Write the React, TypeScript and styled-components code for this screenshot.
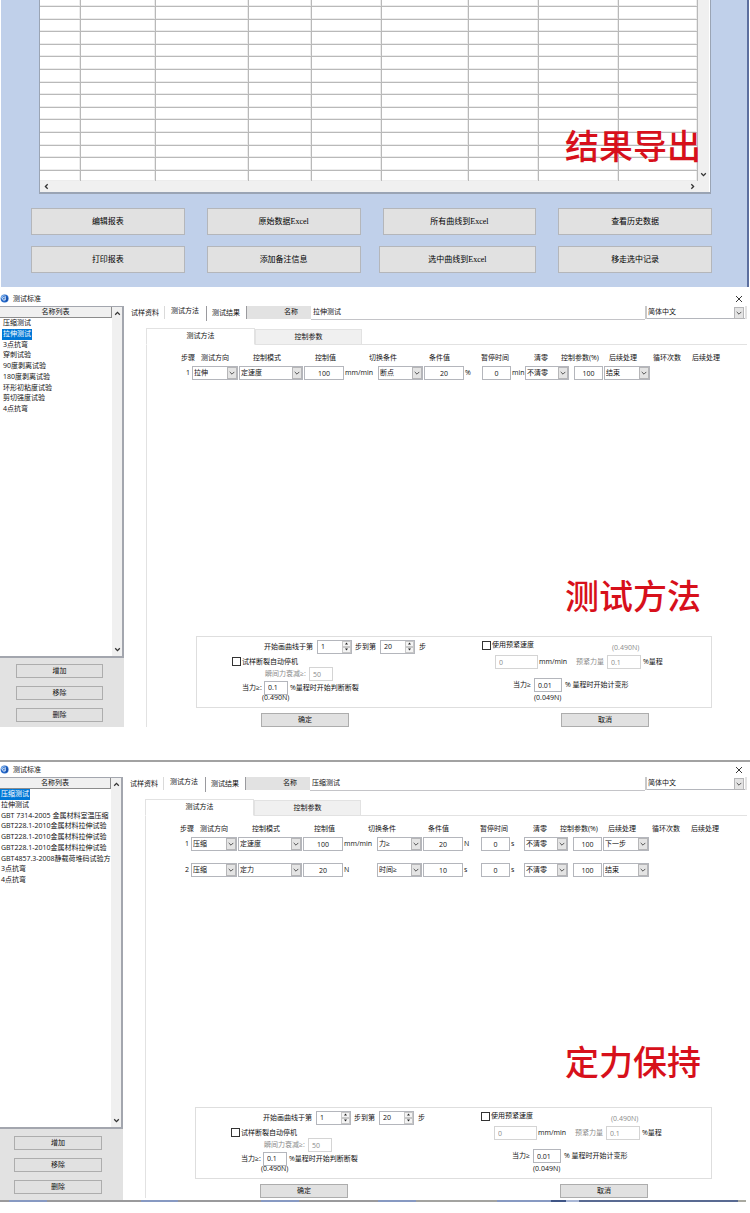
import React from "react";
import styled, { createGlobalStyle, css } from "styled-components";

const Global = createGlobalStyle`
  *, *::before, *::after { box-sizing: border-box; }
  body { margin: 0; background: #fff; }
  body, button, input, select {
    font-family: "Open Sans", "Noto Sans CJK SC", sans-serif;
    font-size: 7px;
    line-height: 10px;
    color: #111;
  }
  button, input, select { margin: 0; padding: 0; border-radius: 0; }
`;

/* ---------- result export ---------- */

const Export = styled.section`
  position: relative;
  margin: 0 1px;
  padding: 0 35px 14px 30px;
  background: #c0d0ea;
  border-right: 2px solid #5c6f9f;
  font-family: "Liberation Serif", "Noto Sans CJK SC", serif;
`;

const Sheet = styled.div`
  display: grid;
  grid-template-columns: 1fr 11px;
  margin: 0 1px 14px 8px;
  padding: 0 2px 0 0;
  background: #fff;
  border: solid #9aa4b4;
  border-width: 0 1px 2px 1px;
`;

const Results = styled.table`
  width: 100%;
  table-layout: fixed;
  border-collapse: separate;
  border-spacing: 0;
`;

const ResultRow = styled.tr`
  height: 13px;
  &:nth-child(5n + 3), &:nth-child(5n) { height: 12px; }
  &:first-child { height: 7px; }
  &:last-child { height: 10px; }
  td {
    padding: 0;
    border-right: 1px solid #b9b9b9;
    border-bottom: 1px solid #b9b9b9;
    box-shadow: inset -1px -1px 0 #ececec;
  }
  &:last-child td { border-bottom: 0; }
`;

const Track = styled.div<{ $across?: boolean }>`
  display: flex;
  align-items: center;
  justify-content: center;
  background: #f0f0f0;
  ${(p) =>
    p.$across
      ? css`
          grid-column: 1 / 3;
          justify-content: space-between;
          height: 11px;
          padding: 0 13px 0 3px;
        `
      : css`
          align-items: flex-end;
          padding-bottom: 3px;
        `}
`;

const ExportActions = styled.div`
  display: grid;
  grid-template-columns: repeat(4, 1fr);
  gap: 11px 22px;
`;

const ExportButton = styled.button<{ $wide?: boolean }>`
  height: 27px;
  margin-left: ${(p) => (p.$wide ? "-4px" : "0")};
  background: #e1e1e1;
  border: 1px solid #b4b6ba;
  font-family: "Liberation Serif", "Noto Sans CJK SC", serif;
  font-size: 8px;
  color: #000;
`;

const captionText = css`
  margin: 0;
  font: 500 34px/40px "Noto Sans CJK SC", sans-serif;
  color: #d7101b;
`;

const OverlayCaption = styled.h2`
  ${captionText}
  position: absolute;
  right: 46px;
  top: 125px;
`;

/* ---------- method window ---------- */

const Window = styled.section<{ $framed?: boolean }>`
  padding-top: ${(p) => (p.$framed ? "0" : "4px")};
  margin-top: ${(p) => (p.$framed ? "33px" : "0")};
  border-top: ${(p) => (p.$framed ? "2px solid #a2a2a2" : "0")};
`;

const TitleBar = styled.header`
  display: flex;
  align-items: center;
  gap: 4px;
  height: 15px;
  padding: 0 6px 0 0;
  svg { flex: none; }
`;

const Title = styled.h3`
  flex: 1;
  margin: 0;
  font-size: 7px;
  font-weight: 400;
`;

const CloseButton = styled.button`
  display: flex;
  padding: 1px;
  background: none;
  border: 0;
`;

const Body = styled.div`
  display: flex;
  align-items: stretch;
`;

const Sidebar = styled.aside<{ $narrow?: boolean }>`
  display: flex;
  flex: none;
  flex-direction: column;
  width: ${(p) => (p.$narrow ? "123px" : "124px")};
  background: #e2e2e2;
`;

const ListBox = styled.div`
  display: grid;
  grid-template-columns: 1fr 10px;
  height: 352px;
  background: #fff;
  border: solid #a3a6ae;
  border-width: 1px 2px 2px 0;
`;

const NameColumn = styled.div`
  min-width: 0;
  overflow: hidden;
`;

const ListHeader = styled.div`
  height: 11px;
  background: #f0f0f0;
  border: solid #8c8c8c;
  border-width: 0 1px 1px 0;
  text-align: center;
`;

const Names = styled.ul<{ $inset: boolean }>`
  margin: 0;
  padding: 0 0 0 ${(p) => (p.$inset ? "2px" : "0")};
  list-style: none;
  overflow: hidden;
`;

const NameItem = styled.li`
  display: flex;
  height: 11px;
  &:nth-child(4n + 3) { height: 10px; }
`;

const NameButton = styled.button<{ $on: boolean }>`
  flex: none;
  padding: 0 1px 2px;
  border: 0;
  background: ${(p) => (p.$on ? "#0078d7" : "transparent")};
  color: ${(p) => (p.$on ? "#fff" : "#111")};
  line-height: 9px;
  white-space: nowrap;
`;

const ListScroll = styled.div`
  display: flex;
  flex-direction: column;
  align-items: center;
  justify-content: space-between;
  padding: 3px 0 3px;
  background: #f0f0f0;
`;

const SideActions = styled.div<{ $narrow?: boolean }>`
  display: flex;
  flex-direction: column;
  gap: 8px;
  padding: ${(p) => (p.$narrow ? "7px 21px 6px 14px" : "6px 21px 5px 16px")};
`;

const PushButton = styled.button`
  height: 14px;
  background: #e1e1e1;
  border: 1px solid #adadad;
  line-height: 10px;
`;

const Main = styled.main<{ $framed?: boolean }>`
  display: flex;
  flex: 1;
  flex-direction: column;
  min-width: 0;
  padding-bottom: ${(p) => (p.$framed ? "2px" : "0")};
`;

const TopBar = styled.div`
  display: flex;
  height: 14px;
  margin-right: 3px;
`;

const TopTab = styled.button<{ $on?: boolean; $first?: boolean }>`
  flex: none;
  width: ${(p) => (p.$first ? "41px" : p.$on ? "42px" : "39px")};
  height: ${(p) => (p.$on ? "15px" : "13px")};
  padding: 0 3px ${(p) => (p.$on ? "5px" : "0")};
  padding-left: ${(p) => (p.$first ? "7px" : p.$on ? "6px" : "5px")};
  background: #fff;
  border: 0;
  border-right: ${(p) => (p.$on ? "1px solid #9a9a9e" : p.$first ? "1px solid #dadada" : "0")};
  text-align: left;
  white-space: nowrap;
`;

const NameLabel = styled.label`
  flex: none;
  width: 65px;
  height: 13px;
  padding: 1px 13px 0 0;
  background: #e2e2e2;
  border-left: 1px solid #9a9a9e;
  text-align: right;
`;

const NameInput = styled.input`
  flex: 1;
  min-width: 0;
  padding: 0 2px 1px;
  border: 0;
  border-bottom: 1px solid #c4c4c8;
`;

const Language = styled.div`
  flex: none;
  width: 102px;
  height: 13px;
  padding-right: 2px;
  background: #e2e2e2;
  border-left: 2px solid #c8c8c8;
`;

const Tabs = styled.div`
  display: flex;
  align-items: flex-end;
  height: 17px;
  margin: 8px 3px 0 22px;
  box-shadow: inset 0 -1px 0 #e2e2e2;
`;

const Tab = styled.button<{ $on?: boolean }>`
  width: ${(p) => (p.$on ? "109px" : "107px")};
  height: ${(p) => (p.$on ? "17px" : "16px")};
  padding-bottom: ${(p) => (p.$on ? "2px" : "0")};
  background: ${(p) => (p.$on ? "#fff" : "#f0f0f0")};
  border: 1px solid #e2e2e2;
  border-bottom-color: ${(p) => (p.$on ? "#fff" : "#e2e2e2")};
`;

const Panel = styled.div`
  display: flex;
  flex: 1;
  flex-direction: column;
  margin-left: 22px;
  border-left: 1px solid #e2e2e2;
`;

const Steps = styled.table`
  width: 545px;
  margin: 6px 0 0 33px;
  table-layout: fixed;
  border-collapse: separate;
  border-spacing: 0;
  white-space: nowrap;
`;

const HeadCell = styled.th<{ $pad: number }>`
  height: 12px;
  padding: 2px 0 0 ${(p) => p.$pad}px;
  font-weight: 400;
  text-align: left;
`;

const StepRow = styled.tr`height: 26px;`;

const Cell = styled.td`
  padding: 3px 1px 0 0;
  vertical-align: top;
`;

const UnitCell = styled(Cell)`
  padding: 5px 0 0;
`;

const StepNumber = styled(UnitCell)`
  padding: 5px 2px 0 0;
  text-align: right;
`;

const SelectBox = styled.span`
  position: relative;
  display: block;
  height: 14px;
  svg {
    position: absolute;
    top: 1px;
    right: 1px;
    pointer-events: none;
  }
`;

const SelectField = styled.select<{ $plain?: boolean }>`
  display: block;
  width: 100%;
  height: ${(p) => (p.$plain ? "13px" : "14px")};
  padding: 0 0 0 1px;
  appearance: none;
  background: #fff;
  border: ${(p) => (p.$plain ? "0" : "1px solid #b4b6bc")};
  border-bottom: 1px solid #b4b6bc;
`;

const Field = styled.input<{ $w?: number; $center?: boolean }>`
  display: block;
  flex: none;
  width: ${(p) => (p.$w ? `${p.$w}px` : "100%")};
  height: 14px;
  padding: 0 3px;
  background: #fff;
  border: 1px solid #b4b6bc;
  text-align: ${(p) => (p.$center ? "center" : "left")};
  &:disabled { border-color: #d4d4d4; color: #8c8c8c; }
`;

const Caption = styled.h2<{ $gap: number }>`
  ${captionText}
  margin: auto 49px ${(p) => p.$gap}px 0;
  text-align: right;
`;

const Group = styled.div`
  display: grid;
  grid-template-columns: 285px 1fr;
  height: 72px;
  margin: 0 38px 0 49px;
  border: 1px solid #dedede;
`;

const Line = styled.div<{ $h: number; $pad?: number; $top?: number }>`
  display: flex;
  align-items: center;
  height: ${(p) => p.$h}px;
  margin-top: ${(p) => p.$top ?? 0}px;
  padding-left: ${(p) => p.$pad ?? 0}px;
  white-space: nowrap;
`;

const Text = styled.label<{ $w?: number; $dim?: boolean; $gap?: number; $low?: boolean }>`
  flex: none;
  align-self: ${(p) => (p.$low ? "flex-end" : "auto")};
  width: ${(p) => (p.$w ? `${p.$w}px` : "auto")};
  padding-left: ${(p) => p.$gap ?? 0}px;
  color: ${(p) => (p.$dim ? "#8c8c8c" : "#111")};
`;

const Check = styled.input`
  flex: none;
  width: 9px;
  height: 9px;
  margin: 0 1px 0 0;
  appearance: none;
  background: #fff;
  border: 1px solid #333;
`;

const SpinBox = styled.span`
  position: relative;
  flex: none;
  width: 35px;
  input {
    appearance: textfield;
    &::-webkit-inner-spin-button { appearance: none; }
  }
`;

const Spinner = styled.span`
  position: absolute;
  top: 1px;
  right: 1px;
  display: flex;
  flex-direction: column;
  width: 9px;
  button {
    display: flex;
    align-items: center;
    justify-content: center;
    height: 6px;
    background: #f4f4f4;
    border: 1px solid #c8c8c8;
  }
`;

const Footer = styled.div`
  display: flex;
  gap: 212px;
  margin-top: 5px;
  padding-left: 114px;
  ${PushButton} { width: 88px; }
`;

const DesktopEdge = styled.div`
  height: 2px;
  margin: 0 4px 11px 0;
  background: linear-gradient(
    to right,
    #9a9a9c 0 9px, #8799c2 9px 47px, #9a9a9c 47px 141px, #8799c2 141px 178px,
    #9a9a9c 178px 261px, #8799c2 261px 299px, #9a9a9c 299px 378px, #8799c2 378px 416px,
    #a3a3a0 416px 497px, #8799c2 497px 551px, #3f5586 551px 566px, #a9b7d6 566px 579px,
    #596a92 579px 738px, #a9a9a0 738px 100%
  );
`;

/* ---------- drawings ---------- */

const turns = { down: 0, left: 90, up: 180, right: 270 };

const ScrollArrow = ({ to }: { to: keyof typeof turns }) => (
  <svg width="7" height="7" viewBox="0 0 7 7" aria-hidden="true">
    <path
      d="M1.2 2.3 3.5 4.6 5.8 2.3"
      transform={`rotate(${turns[to]} 3.5 3.5)`}
      fill="none"
      stroke="#333"
      strokeWidth="1.3"
    />
  </svg>
);

const DropArrow = () => (
  <svg width="10" height="12" viewBox="0 0 10 12" aria-hidden="true">
    <rect x=".5" y=".5" width="9" height="11" fill="#e4e4e4" stroke="#b6b6b8" />
    <path d="M2.7 4.9 5 7.2 7.3 4.9" fill="none" stroke="#555" />
  </svg>
);

const AppIcon = () => (
  <svg width="9" height="9" viewBox="0 0 9 9" aria-hidden="true">
    <circle cx="4.6" cy="4.5" r="4" fill="#2468c8" />
    <path d="M.8 3.2C1.8 1.4 3.6.8 5 1.2 3.4 1.8 2.2 3.4 2.2 5.6z" fill="#8fbcf0" />
    <path d="M5.2 1.8V6H3.4a1.3 1.3 0 0 1 0-2.4h1" fill="none" stroke="#fff" strokeWidth=".9" />
    <path d="M6.2 2.6C7.6 4 7.4 6 6 7.4" fill="none" stroke="#123f93" strokeWidth=".9" />
  </svg>
);

const Cross = () => (
  <svg width="8" height="8" viewBox="0 0 8 8" aria-hidden="true">
    <path d="M1 1 7 7M7 1 1 7" stroke="#222" strokeWidth=".9" />
  </svg>
);

/* ---------- controls ---------- */

const Select = ({ value, label, plain }: { value: string; label: string; plain?: boolean }) => (
  <SelectBox>
    <SelectField aria-label={label} defaultValue={value} $plain={plain}>
      <option>{value}</option>
    </SelectField>
    <DropArrow />
  </SelectBox>
);

const Spin = ({ id, value }: { id: string; value: number }) => (
  <SpinBox>
    <Field id={id} type="number" defaultValue={value} />
    <Spinner>
      <button type="button" aria-label="+">
        <svg width="5" height="3" viewBox="0 0 5 3"><path d="M1 2.6 2.5 .5 4 2.6z" fill="#222" /></svg>
      </button>
      <button type="button" aria-label="-">
        <svg width="5" height="3" viewBox="0 0 5 3"><path d="M1 .4 2.5 2.5 4 .4z" fill="#222" /></svg>
      </button>
    </Spinner>
  </SpinBox>
);

const resultColumns = [41, 75, 93, 63, 70, 87, 70, 80, 79];
const exportActions = [
  "编辑报表", "原始数据Excel", "所有曲线到Excel", "查看历史数据",
  "打印报表", "添加备注信息", "选中曲线到Excel", "移走选中记录",
];

const ResultExport = () => (
  <Export>
    <Sheet>
      <Results>
        <colgroup>
          {resultColumns.map((w, i) => <col key={i} width={w} />)}
        </colgroup>
        <tbody>
          {Array.from({ length: 15 }, (_, r) => (
            <ResultRow key={r}>
              {resultColumns.map((_w, c) => <td key={c} />)}
            </ResultRow>
          ))}
        </tbody>
      </Results>
      <Track><ScrollArrow to="down" /></Track>
      <Track $across><ScrollArrow to="left" /><ScrollArrow to="right" /></Track>
    </Sheet>
    <ExportActions>
      {exportActions.map((name, i) => (
        <ExportButton key={name} type="button" $wide={i === 6}>{name}</ExportButton>
      ))}
    </ExportActions>
    <OverlayCaption>结果导出</OverlayCaption>
  </Export>
);

const stepColumns = [12, 47, 65, 41, 33, 46, 41, 17, 30, 13, 36, 13, 30, 47, 41, 33];
const stepHeads: [string, number, number][] = [
  ["步骤", 1, 1], ["测试方向", 1, 9], ["控制模式", 1, 14], ["控制值", 1, 11],
  ["切换条件", 2, 24], ["条件值", 1, 5], ["暂停时间", 2, 16], ["清零", 2, 22],
  ["控制参数(%)", 2, 0], ["后续处理", 1, 5], ["循环次数", 1, 2], ["后续处理", 1, 0],
];

interface Step {
  direction: string;
  mode: string;
  value: string;
  unit: string;
  condition: string;
  limit: string;
  limitUnit: string;
  pauseUnit: string;
  next: string;
}

interface MethodProps {
  id: string;
  names: string[];
  selected: string;
  steps: Step[];
  caption: string;
  captionGap: number;
  framed?: boolean;
}

const SelectCap = styled.div`
  padding-right: 4px;
`;

const MethodWindow = ({ id, names, selected, steps, caption, captionGap, framed }: MethodProps) => (
  <Window $framed={framed}>
    <TitleBar>
      <AppIcon />
      <Title>测试标准</Title>
      <CloseButton type="button" aria-label="关闭"><Cross /></CloseButton>
    </TitleBar>
    <Body>
      <Sidebar $narrow={framed}>
        <ListBox>
          <NameColumn>
            <ListHeader>名称列表</ListHeader>
            <Names $inset={!framed}>
              {names.map((name, i) => (
                <NameItem key={i}>
                  <NameButton type="button" $on={name === selected}>{name}</NameButton>
                </NameItem>
              ))}
            </Names>
          </NameColumn>
          <ListScroll><ScrollArrow to="up" /><ScrollArrow to="down" /></ListScroll>
        </ListBox>
        <SideActions $narrow={framed}>
          <PushButton type="button">增加</PushButton>
          <PushButton type="button">移除</PushButton>
          <PushButton type="button">删除</PushButton>
        </SideActions>
      </Sidebar>
      <Main $framed={framed}>
        <TopBar>
          <TopTab type="button" $first>试样资料</TopTab>
          <TopTab type="button" $on>测试方法</TopTab>
          <TopTab type="button">测试结果</TopTab>
          <NameLabel htmlFor={`${id}-name`}>名称</NameLabel>
          <NameInput id={`${id}-name`} defaultValue={selected} />
          <Language><Select label="语言" value="简体中文" plain /></Language>
        </TopBar>
        <Tabs>
          <Tab type="button" $on>测试方法</Tab>
          <Tab type="button">控制参数</Tab>
        </Tabs>
        <Panel>
          <Steps>
            <colgroup>
              {stepColumns.map((w, i) => <col key={i} width={w} />)}
            </colgroup>
            <thead>
              <tr>
                {stepHeads.map(([text, span, pad], i) => (
                  <HeadCell key={i} colSpan={span} $pad={pad}>{text}</HeadCell>
                ))}
              </tr>
            </thead>
            <tbody>
              {steps.map((s, i) => (
                <StepRow key={i}>
                  <StepNumber>{i + 1}</StepNumber>
                  <Cell><Select label="测试方向" value={s.direction} /></Cell>
                  <Cell><Select label="控制模式" value={s.mode} /></Cell>
                  <Cell><Field aria-label="控制值" defaultValue={s.value} $center /></Cell>
                  <UnitCell>{s.unit}</UnitCell>
                  <Cell><Select label="切换条件" value={s.condition} /></Cell>
                  <Cell><Field aria-label="条件值" defaultValue={s.limit} $center /></Cell>
                  <UnitCell>{s.limitUnit}</UnitCell>
                  <Cell><Field aria-label="暂停时间" defaultValue="0" $center /></Cell>
                  <UnitCell>{s.pauseUnit}</UnitCell>
                  <Cell colSpan={2}><SelectCap><Select label="清零" value="不清零" /></SelectCap></Cell>
                  <Cell><Field aria-label="控制参数" defaultValue="100" $center /></Cell>
                  <Cell><Select label="后续处理" value={s.next} /></Cell>
                  <Cell />
                  <Cell />
                </StepRow>
              ))}
            </tbody>
          </Steps>
          <Caption $gap={captionGap}>{caption}</Caption>
          <Group>
            <div>
              <Line $h={19} $pad={67}>
                <Text $w={53} htmlFor={`${id}-from`}>开始画曲线于第</Text>
                <Spin id={`${id}-from`} value={1} />
                <Text $w={28} $gap={3} htmlFor={`${id}-to`}>步到第</Text>
                <Spin id={`${id}-to`} value={20} />
                <Text as="span" $gap={4}>步</Text>
              </Line>
              <Line $h={11} $pad={35}>
                <Check id={`${id}-stop`} type="checkbox" />
                <Text htmlFor={`${id}-stop`}>试样断裂自动停机</Text>
              </Line>
              <Line $h={14} $pad={68}>
                <Text $w={44} $dim htmlFor={`${id}-decay`}>瞬间力衰减≥:</Text>
                <Field id={`${id}-decay`} $w={24} defaultValue="50" disabled />
              </Line>
              <Line $h={13} $pad={45}>
                <Text $w={22} htmlFor={`${id}-force`}>当力≥:</Text>
                <Field id={`${id}-force`} $w={24} defaultValue="0.1" />
                <Text as="span" $gap={2}>%量程时开始判断断裂</Text>
              </Line>
              <Line $h={8} $pad={65}>(0.490N)</Line>
            </div>
            <div>
              <Line $h={16}>
                <Check id={`${id}-pre`} type="checkbox" />
                <Text $w={120} htmlFor={`${id}-pre`}>使用预紧速度</Text>
                <Text as="span" $dim $low>(0.490N)</Text>
              </Line>
              <Line $h={14} $pad={13} $top={2}>
                <Field aria-label="预紧速度" $w={43} defaultValue="0" disabled />
                <Text as="span" $w={38} $gap={1}>mm/min</Text>
                <Text $w={31} $dim htmlFor={`${id}-preforce`}>预紧力量</Text>
                <Field id={`${id}-preforce`} $w={34} defaultValue="0.1" disabled />
                <Text as="span" $gap={2}>%量程</Text>
              </Line>
              <Line $h={14} $pad={31} $top={9}>
                <Text $w={21} htmlFor={`${id}-strain`}>当力≥</Text>
                <Field id={`${id}-strain`} $w={28} defaultValue="0.01" />
                <Text as="span" $gap={3}>% 量程时开始计变形</Text>
              </Line>
              <Line $h={11} $pad={52}>(0.049N)</Line>
            </div>
          </Group>
          <Footer>
            <PushButton type="button">确定</PushButton>
            <PushButton type="button">取消</PushButton>
          </Footer>
        </Panel>
      </Main>
    </Body>
  </Window>
);

const tensileNames = [
  "压缩测试", "拉伸测试", "3点抗弯", "穿刺试验", "90度剥离试验",
  "180度剥离试验", "环形初粘度试验", "剪切强度试验", "4点抗弯",
];
const compressionNames = [
  "压缩测试", "拉伸测试", "GBT 7314-2005 金属材料室温压缩",
  "GBT228.1-2010金属材料拉伸试验", "GBT228.1-2010金属材料拉伸试验",
  "GBT228.1-2010金属材料拉伸试验", "GBT4857.3-2008静载荷堆码试验方",
  "3点抗弯", "4点抗弯",
];

export default function App() {
  return (
    <>
      <Global />
      <ResultExport />
      <MethodWindow
        id="tensile"
        names={tensileNames}
        selected="拉伸测试"
        caption="测试方法"
        captionGap={21}
        steps={[
          { direction: "拉伸", mode: "定速度", value: "100", unit: "mm/min", condition: "断点", limit: "20", limitUnit: "%", pauseUnit: "min", next: "结束" },
        ]}
      />
      <MethodWindow
        id="hold"
        names={compressionNames}
        selected="压缩测试"
        caption="定力保持"
        captionGap={26}
        framed
        steps={[
          { direction: "压缩", mode: "定速度", value: "100", unit: "mm/min", condition: "力≥", limit: "20", limitUnit: "N", pauseUnit: "s", next: "下一步" },
          { direction: "压缩", mode: "定力", value: "20", unit: "N", condition: "时间≥", limit: "10", limitUnit: "s", pauseUnit: "s", next: "结束" },
        ]}
      />
      <DesktopEdge />
    </>
  );
}
